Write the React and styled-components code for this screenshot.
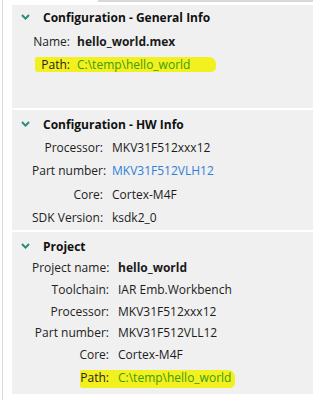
import React from "react"
import styled, { createGlobalStyle } from "styled-components"

const GlobalStyle = createGlobalStyle`
  html, body { margin: 0; padding: 0; background: #ffffff; }
  body {
    font-family: "Open Sans", "Noto Sans", sans-serif;
    font-size: 12px;
    color: #1b1b1b;
  }
`

const Page = styled.div`
  width: 311px;
  height: 400px;
  overflow: hidden;
  box-sizing: border-box;
  margin-left: 2px;
  padding-left: 9px;
  border-left: 1px solid #dadada;
`

const TopEdge = styled.div`
  height: 2px;
  margin-left: 86px;
  margin-bottom: 3px;
  background: #d8d8d8;
`

const Panel = styled.section`
  background: #f0f0f0;
  height: ${p => p.h}px;
  margin-bottom: 2px;
  padding-top: ${p => p.top}px;
  box-sizing: border-box;
`

const Header = styled.div`
  display: flex;
  align-items: center;
  height: 20px;
  padding-left: 9px;
  font-weight: 700;
  font-size: 12px;
  color: #111;
  margin-bottom: ${p => p.gap}px;
`

const Chevron = styled.svg`
  width: 9px;
  height: 6px;
  margin-right: 13px;
  flex: none;
`

const Row = styled.div`
  position: relative;
  display: grid;
  grid-template-columns: ${p => p.labelW}px auto;
  column-gap: ${p => p.colGap}px;
  width: fit-content;
  height: ${p => p.h}px;
  margin-top: ${p => p.mt || 0}px;
  align-items: center;
  padding-left: 20px;
  white-space: nowrap;

  ${p => p.mark && `
    &::before {
      content: "";
      position: absolute;
      left: ${p.mark[0]}px;
      right: ${p.mark[1]}px;
      top: ${p.mark[2]}px;
      bottom: ${p.mark[3]}px;
      background: #f2f01e;
      border-radius: 2px 7px 5px 3px;
    }
  `}
`

const Label = styled.span`
  position: relative;
  text-align: right;
  color: #222;
`

const Value = styled.span`
  position: relative;
  color: ${p => p.tone === "link" ? "#2f7fd6" : p.tone === "path" ? "#3a9c12" : "#1b1b1b"};
  font-weight: ${p => p.bold ? 700 : 400};
`

const ChevronIcon = () => (
  <Chevron viewBox="0 0 9 6">
    <path d="M1 1 L4.5 4.6 L8 1" fill="none" stroke="#2a8a78" strokeWidth="2" />
  </Chevron>
)

const sections = [
  {
    title: "Configuration - General Info",
    h: 103, top: 2, labelW: 38, colGap: 7, rowH: 23, gap: 2.5,
    rows: [
      { label: "Name:", value: "hello_world.mex", bold: true },
      { label: "Path:", value: "C:\\temp\\hello_world", tone: "path", mark: [23, -26, 4.5, 3.5] },
    ],
  },
  {
    title: "Configuration - HW Info",
    h: 120, top: 4, labelW: 71, colGap: 9, rowH: 23.5, gap: 1.25,
    rows: [
      { label: "Processor:", value: "MKV31F512xxx12" },
      { label: "Part number:", value: "MKV31F512VLH12", tone: "link" },
      { label: "Core:", value: "Cortex-M4F" },
      { label: "SDK Version:", value: "ksdk2_0" },
    ],
  },
  {
    title: "Project",
    h: 162, top: 4, labelW: 77, colGap: 9, rowH: 21.6, gap: 1.2,
    rows: [
      { label: "Project name:", value: "hello_world", bold: true },
      { label: "Toolchain:", value: "IAR Emb.Workbench" },
      { label: "Processor:", value: "MKV31F512xxx12" },
      { label: "Part number:", value: "MKV31F512VLL12" },
      { label: "Core:", value: "Cortex-M4F" },
      { label: "Path:", value: "C:\\temp\\hello_world", tone: "path", mt: 2, mark: [68, -4, 3, 1] },
    ],
  },
]

const App = () => {
  return (
    <Page>
      <GlobalStyle />
      <TopEdge />
      {sections.map(s => (
        <Panel key={s.title} h={s.h} top={s.top}>
          <Header gap={s.gap}>
            <ChevronIcon />
            {s.title}
          </Header>
          {s.rows.map(r => (
            <Row key={r.label} labelW={s.labelW} colGap={s.colGap} h={s.rowH} mt={r.mt} mark={r.mark}>
              <Label>{r.label}</Label>
              <Value tone={r.tone} bold={r.bold}>{r.value}</Value>
            </Row>
          ))}
        </Panel>
      ))}
    </Page>
  )
}

export default App
